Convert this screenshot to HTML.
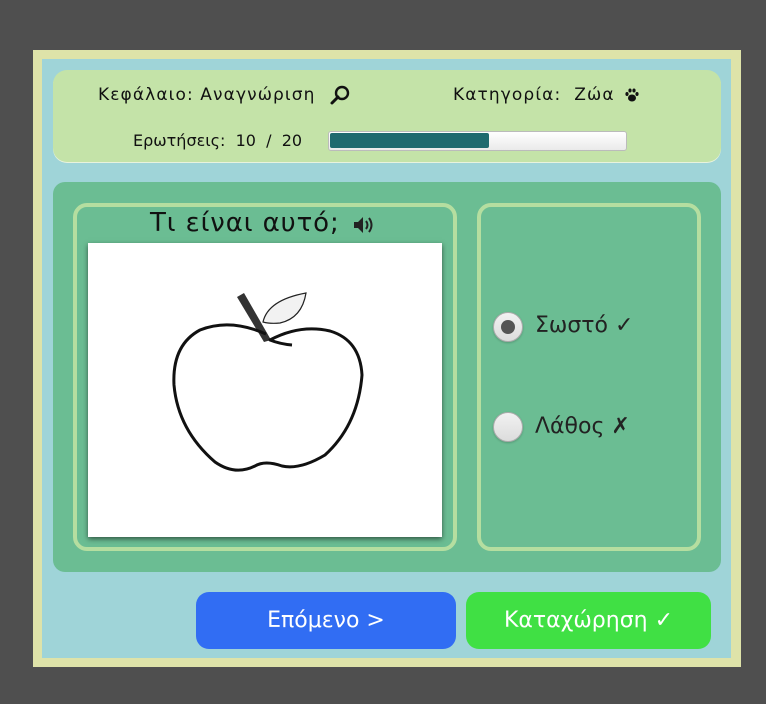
<!DOCTYPE html>
<html><head><meta charset="utf-8"><style>
*{margin:0;padding:0;box-sizing:border-box}
body{width:766px;height:704px;background:#4f4f4f;font-family:"DejaVu Sans","Liberation Sans",sans-serif;position:relative;overflow:hidden}
.abs{position:absolute}
#frame{left:33px;top:50px;width:708px;height:617px;background:#dee3a9}
#inner{left:42px;top:59px;width:689px;height:599px;background:#9fd4d8}
#top{left:53px;top:70px;width:668px;height:92px;background:#c4e3a8;border-radius:14px;box-shadow:0 1px 0 #e8f3dd}
.t{font-size:17px;color:#111;white-space:nowrap;letter-spacing:1.1px}
#main{left:53px;top:182px;width:668px;height:390px;background:#6bbd93;border-radius:12px}
.box{border:4px solid #b5dea0;border-radius:14px}
#img{left:88px;top:243px;width:354px;height:294px;background:#fff;box-shadow:0 2px 5px rgba(0,0,0,.55)}
.radio{width:30px;height:30px;border-radius:50%;background:linear-gradient(#f2f2f2,#dcdcdc);border:1px solid #aaa;box-shadow:0 1px 2px rgba(0,0,0,.2)}
.btn{border-radius:13px;color:#fff;font-size:22px;display:flex;align-items:center;justify-content:center}
</style></head><body>
<div class="abs" id="frame"></div>
<div class="abs" id="inner"></div>
<div class="abs" id="top"></div>
<div class="abs t" style="left:98px;top:85px">Κεφάλαιο: Αναγνώριση</div>
<svg class="abs" style="left:329px;top:84px" width="22" height="22" viewBox="0 0 22 22"><circle cx="13" cy="9" r="6" fill="none" stroke="#111" stroke-width="2.4"/><path d="M9 13 L3 19" stroke="#111" stroke-width="3" stroke-linecap="round"/></svg>
<div class="abs t" style="left:453px;top:85px">Κατηγορία:&nbsp; Ζώα</div>
<svg class="abs" style="left:624px;top:87px" width="16" height="16" viewBox="0 0 16 16" fill="#111"><ellipse cx="8" cy="11" rx="4" ry="3.5"/><ellipse cx="3" cy="7" rx="1.6" ry="2"/><ellipse cx="6" cy="3.5" rx="1.6" ry="2"/><ellipse cx="10" cy="3.5" rx="1.6" ry="2"/><ellipse cx="13" cy="7" rx="1.6" ry="2"/></svg>
<div class="abs t" style="left:133px;top:131px;font-size:16px;letter-spacing:0">Ερωτήσεις:&nbsp; 10&nbsp; /&nbsp; 20</div>
<div class="abs" style="left:328px;top:131px;width:299px;height:20px;background:linear-gradient(#fff,#eaeaea);border:1px solid #bbb;border-radius:3px"></div>
<div class="abs" style="left:330px;top:133px;width:159px;height:15px;background:#1f6a6f;border-radius:2px"></div>
<div class="abs" id="main"></div>
<div class="abs box" style="left:73px;top:203px;width:384px;height:348px"></div>
<div class="abs box" style="left:477px;top:203px;width:224px;height:348px"></div>
<div class="abs" style="left:150px;top:208px;font-size:26px;color:#111;white-space:nowrap;letter-spacing:0.9px">Τι είναι αυτό;</div>
<svg class="abs" style="left:352px;top:215px" width="24" height="20" viewBox="0 0 24 20"><path d="M2 7h4l5-5v16l-5-5H2z" fill="#222"/><path d="M14 6q3 4 0 8M17 3q5 7 0 14" fill="none" stroke="#222" stroke-width="2"/></svg>
<div class="abs" id="img"></div>
<svg class="abs" style="left:88px;top:243px" width="354" height="294" viewBox="88 243 354 294">
<path d="M237 297 L244 293 L271 340 L264 342 Z" fill="#333"/>
<path d="M263 322 Q268 300 306 293 Q302 318 280 323 Q270 324 263 322 Z" fill="#f2f2f2" stroke="#222" stroke-width="1.2"/>
<path d="M266 334 Q230 318 200 330 Q172 345 174 385 Q178 430 215 462 Q235 476 255 466 Q265 460 282 466 Q300 470 325 455 Q358 425 362 375 Q360 340 330 331 Q300 324 270 340 Q280 344 292 345" fill="none" stroke="#111" stroke-width="3" stroke-linejoin="round"/>
</svg>
<div class="abs radio" style="left:493px;top:312px"><div style="position:absolute;left:7px;top:7px;width:14px;height:14px;border-radius:50%;background:#555"></div></div>
<div class="abs" style="left:535px;top:313px;font-size:22px;color:#222">Σωστό ✓</div>
<div class="abs radio" style="left:493px;top:412px"></div>
<div class="abs" style="left:535px;top:414px;font-size:22px;color:#222">Λάθος ✗</div>
<div class="abs btn" style="left:196px;top:592px;width:260px;height:57px;background:#316df3">Επόμενο &gt;</div>
<div class="abs btn" style="left:466px;top:592px;width:245px;height:57px;background:#40e044">Καταχώρηση ✓</div>
</body></html>
